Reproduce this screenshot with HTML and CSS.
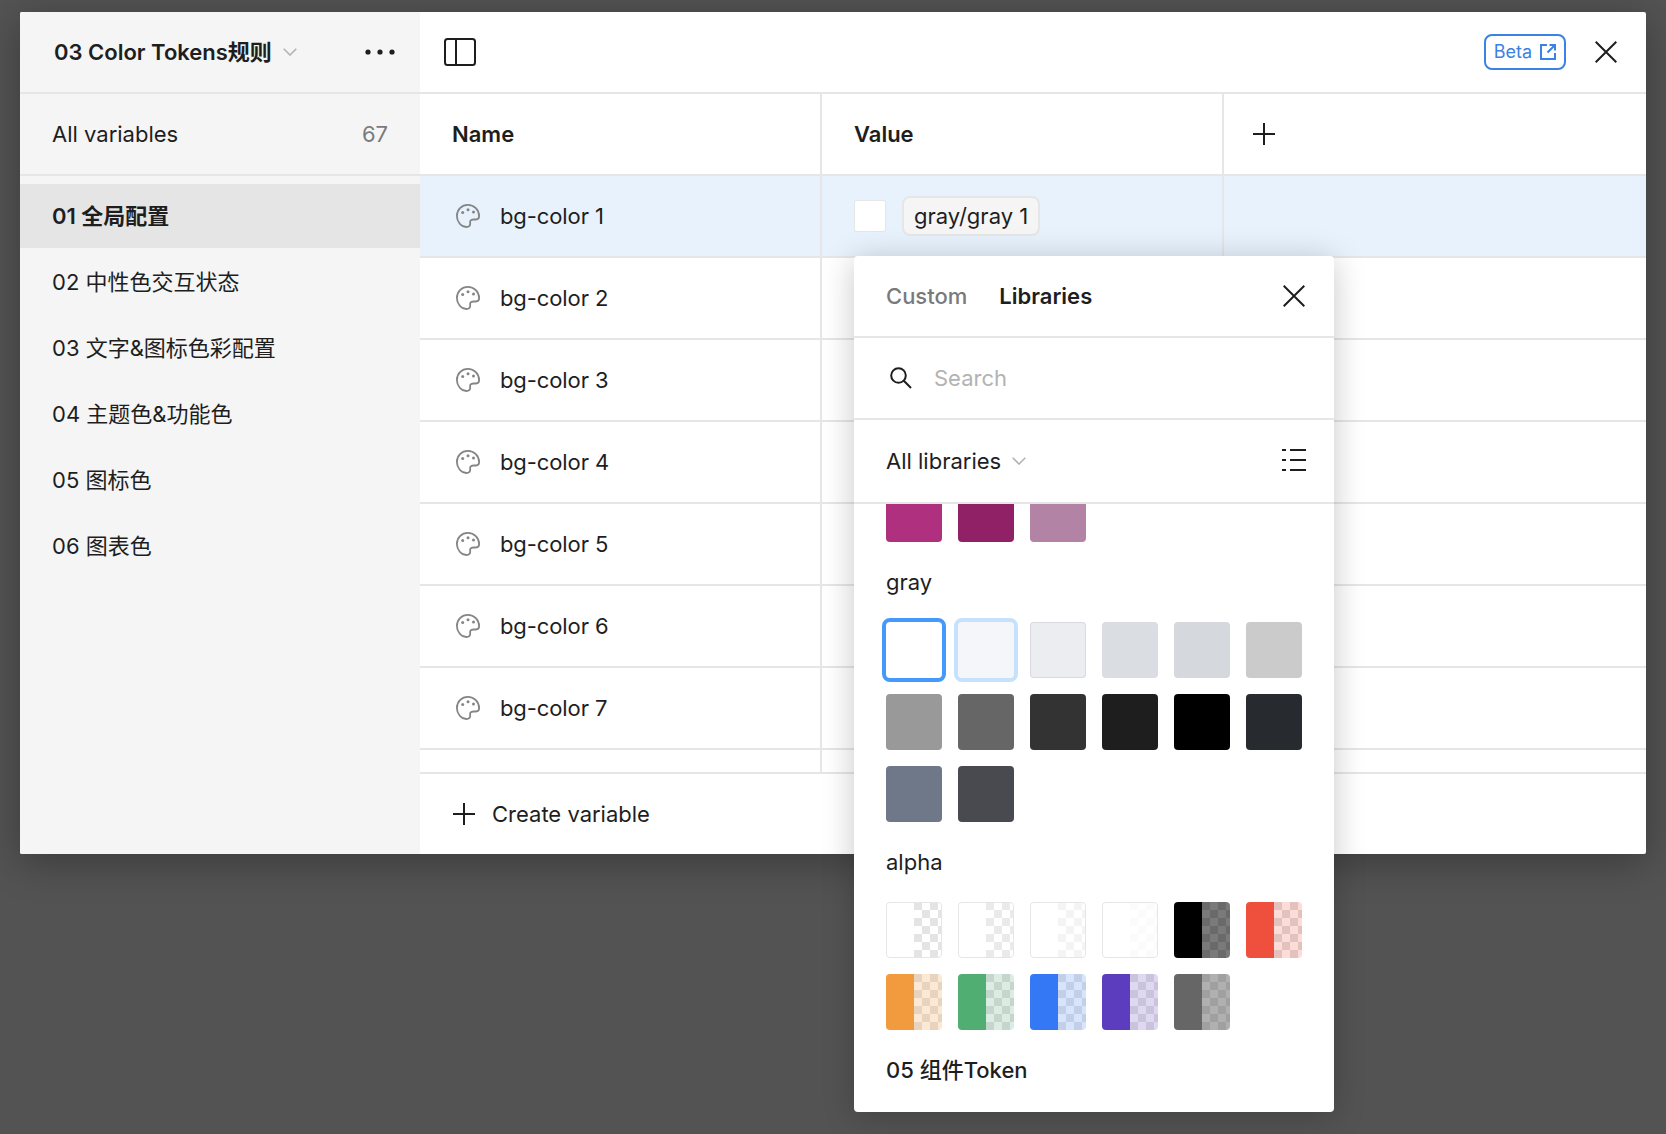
FILE: index.html
```html
<!DOCTYPE html>
<html>
<head>
    <title>Variables</title>
    <link rel="stylesheet" href="styles.css">
</head>
<body>
    <svg class="defs" width="0" height="0">
        <symbol id="palette" viewBox="0 0 24 24">
            <path d="M12 .9C5.500.9.900 5.800.900 12c0 6 4.500 11 9.400 11 2.500 0 3.900-1 3.900-3.200 0-1.500-.3-2.200.2-3.100.7-1.100 2-1.200 3.100-1.200h2.500c2 0 3.100-1.300 3.100-3.500C23.100 6 18 .9 12 .9Z" fill="none" stroke="#858585" stroke-width="1.800"/>
            <circle cx="6.700" cy="8.600" r="1.500" fill="#858585"/>
            <circle cx="12" cy="5.800" r="1.500" fill="#858585"/>
            <circle cx="17.500" cy="8" r="1.500" fill="#858585"/>
        </symbol>
        <symbol id="close" viewBox="0 0 22 22">
            <path d="M.7.7l20.600 20.600M21.300.7L.7 21.300" fill="none" stroke="#1e1e1e" stroke-width="2"/>
        </symbol>
        <symbol id="plus" viewBox="0 0 22 22">
            <path d="M11 0v22M0 11h22" fill="none" stroke="#1e1e1e" stroke-width="2"/>
        </symbol>
        <symbol id="chevron" viewBox="0 0 14 8">
            <path d="M.7.7L7 7l6.300-6.300" fill="none" stroke="#b3b3b3" stroke-width="1.600"/>
        </symbol>
    </svg>

    <div class="window">
        <div class="topbar">
            <div class="collection">
                <span class="collection-name">03 Color Tokens规则</span>
                <svg class="chevron"><use href="#chevron"/></svg>
                <svg class="dots" viewBox="0 0 30 6"><circle cx="3" cy="3" r="2.600"/><circle cx="15" cy="3" r="2.600"/><circle cx="27" cy="3" r="2.600"/></svg>
            </div>
            <div class="toolbar">
                <svg class="panel-icon" viewBox="0 0 32 28">
                    <rect x="1" y="1" width="30" height="26" rx="2.500"/>
                    <path d="M12 1v26"/>
                </svg>
                <div class="toolbar-right">
                    <div class="beta">
                        <span>Beta</span>
                        <svg class="beta-icon" viewBox="0 0 16 16"><path d="M7 1H1v14h14V9M9.500 1H15v5.500M15 1L7.500 8.500"/></svg>
                    </div>
                    <svg class="close"><use href="#close"/></svg>
                </div>
            </div>
        </div>

        <div class="content">
            <div class="sidebar">
                <div class="all-vars">
                    <span>All variables</span>
                    <span class="count">67</span>
                </div>
                <ul class="groups">
                    <li class="selected">01 全局配置</li>
                    <li>02 中性色交互状态</li>
                    <li>03 文字&amp;图标色彩配置</li>
                    <li>04 主题色&amp;功能色</li>
                    <li>05 图标色</li>
                    <li>06 图表色</li>
                </ul>
            </div>

            <div class="main">
                <div class="row head">
                    <div class="cell">Name</div>
                    <div class="cell">Value</div>
                    <div class="cell add"><svg class="plus"><use href="#plus"/></svg></div>
                </div>
                <div class="row active">
                    <div class="cell var-name"><svg class="palette"><use href="#palette"/></svg>bg-color 1</div>
                    <div class="cell">
                        <span class="value-swatch"></span>
                        <span class="chip">gray/gray 1</span>
                    </div>
                    <div class="cell"></div>
                </div>
                <div class="row">
                    <div class="cell var-name"><svg class="palette"><use href="#palette"/></svg>bg-color 2</div>
                    <div class="cell"></div>
                    <div class="cell"></div>
                </div>
                <div class="row">
                    <div class="cell var-name"><svg class="palette"><use href="#palette"/></svg>bg-color 3</div>
                    <div class="cell"></div>
                    <div class="cell"></div>
                </div>
                <div class="row">
                    <div class="cell var-name"><svg class="palette"><use href="#palette"/></svg>bg-color 4</div>
                    <div class="cell"></div>
                    <div class="cell"></div>
                </div>
                <div class="row">
                    <div class="cell var-name"><svg class="palette"><use href="#palette"/></svg>bg-color 5</div>
                    <div class="cell"></div>
                    <div class="cell"></div>
                </div>
                <div class="row">
                    <div class="cell var-name"><svg class="palette"><use href="#palette"/></svg>bg-color 6</div>
                    <div class="cell"></div>
                    <div class="cell"></div>
                </div>
                <div class="row">
                    <div class="cell var-name"><svg class="palette"><use href="#palette"/></svg>bg-color 7</div>
                    <div class="cell"></div>
                    <div class="cell"></div>
                </div>
                <div class="row cut">
                    <div class="cell"></div>
                    <div class="cell"></div>
                    <div class="cell"></div>
                </div>
                <div class="create">
                    <svg class="plus"><use href="#plus"/></svg>
                    <span>Create variable</span>
                </div>
            </div>
        </div>

        <!-- colour picker sits over the table and hangs below the window -->
        <div class="picker">
            <div class="picker-tabs">
                <span class="tab">Custom</span>
                <span class="tab on">Libraries</span>
                <svg class="close"><use href="#close"/></svg>
            </div>
            <div class="picker-search">
                <svg class="search-icon" viewBox="0 0 22 22"><circle cx="8.500" cy="8.500" r="7.300"/><path d="M13.800 13.800L21 21"/></svg>
                <span>Search</span>
            </div>
            <div class="picker-filter">
                <span>All libraries</span>
                <svg class="chevron"><use href="#chevron"/></svg>
                <svg class="list-icon" viewBox="0 0 24 22"><path d="M0 1h4M8 1h16M0 11h4M8 11h16M0 21h4M8 21h16"/></svg>
            </div>
            <div class="picker-list">
                <div class="swatches cut-top">
                    <span class="sw c-pink1"></span>
                    <span class="sw c-pink2"></span>
                    <span class="sw c-pink3"></span>
                </div>
                <div class="lib-label">gray</div>
                <div class="swatches">
                    <span class="sw c-white picked"></span>
                    <span class="sw c-g2 hovered"></span>
                    <span class="sw c-g3"></span>
                    <span class="sw c-g4"></span>
                    <span class="sw c-g5"></span>
                    <span class="sw c-g6"></span>
                    <span class="sw c-g7"></span>
                    <span class="sw c-g8"></span>
                    <span class="sw c-g9"></span>
                    <span class="sw c-g10"></span>
                    <span class="sw c-g11"></span>
                    <span class="sw c-g12"></span>
                    <span class="sw c-g13"></span>
                    <span class="sw c-g14"></span>
                </div>
                <div class="lib-label">alpha</div>
                <div class="swatches">
                    <span class="sw alpha a-w1"></span>
                    <span class="sw alpha a-w2"></span>
                    <span class="sw alpha a-w3"></span>
                    <span class="sw alpha a-w4"></span>
                    <span class="sw alpha a-black"></span>
                    <span class="sw alpha a-red"></span>
                    <span class="sw alpha a-orange"></span>
                    <span class="sw alpha a-green"></span>
                    <span class="sw alpha a-blue"></span>
                    <span class="sw alpha a-purple"></span>
                    <span class="sw alpha a-gray"></span>
                </div>
                <div class="lib-label strong">05 组件Token</div>
            </div>
        </div>
    </div>
</body>
</html>
```

FILE: styles.css
```css
* { box-sizing: border-box; }
html, body { height: 100%; }
body {
    margin: 0;
    padding: 12px 20px;
    background: #535353;
    overflow: hidden;
    font-family: Inter, "Noto Sans CJK SC", sans-serif;
    font-size: 22px;
    line-height: 24px;
    color: #1e1e1e;
}
svg { display: block; flex: none; }
.defs { position: absolute; }

.window {
    position: relative;
    width: 1626px;
    height: 842px;
    background: #fff;
    border-radius: 2px;
    box-shadow: 0 8px 40px rgba(0, 0, 0, .3);
}

/* top bar */
.topbar { display: flex; height: 82px; border-bottom: 2px solid #e6e6e6; }
.collection {
    display: flex;
    align-items: center;
    width: 400px;
    padding: 0 24px 0 34px;
    background: #f5f5f5;
    border-radius: 2px 0 0 0;
}
.collection-name { font-weight: 600; }
.collection .chevron { margin-left: 11px; }
.chevron { width: 14px; height: 8px; }
.dots { width: 32px; height: 6px; margin-left: auto; fill: #1e1e1e; }
.toolbar { flex: 1; display: flex; align-items: center; padding: 0 29px 0 24px; }
.panel-icon { width: 32px; height: 28px; fill: none; stroke: #1e1e1e; stroke-width: 2; }
.toolbar-right { display: flex; align-items: center; margin-left: auto; }
.beta {
    display: flex;
    align-items: center;
    gap: 8px;
    height: 36px;
    padding: 0 8px;
    border: 2px solid #3b82e4;
    border-radius: 8px;
    font-size: 18px;
    color: #3b82e4;
}
.beta-icon { width: 16px; height: 16px; fill: none; stroke: #3b82e4; stroke-width: 2; }
.close { width: 22px; height: 22px; }
.toolbar-right .close { margin-left: 29px; }

/* body */
.content { display: flex; height: 760px; }
.sidebar { width: 400px; background: #f5f5f5; border-radius: 0 0 0 2px; }
.all-vars {
    display: flex;
    justify-content: space-between;
    align-items: center;
    height: 82px;
    padding: 0 32px;
    border-bottom: 2px solid #e6e6e6;
}
.count { color: #7a7a7a; }
.groups { margin: 0; padding: 8px 0 0; list-style: none; }
.groups li {
    display: flex;
    align-items: center;
    height: 64px;
    margin-bottom: 2px;
    padding: 0 32px;
}
.groups .selected { background: #e5e5e5; font-weight: 600; }

/* table */
.main { flex: 1; display: flex; flex-direction: column; }
.row {
    display: grid;
    grid-template-columns: 402px 402px 1fr;
    height: 82px;
    flex: none;
    border-bottom: 2px solid #e6e6e6;
}
.row.head { font-weight: 600; }
.row.active { background: #e7f2fc; }
.row.cut { height: 22px; border-bottom: 0; }
.cell {
    display: flex;
    align-items: center;
    padding: 0 32px;
    border-right: 2px solid #e6e6e6;
}
.cell:last-child { border-right: 0; }
.cell.add { padding-left: 29px; }
.var-name { letter-spacing: -.1px; }
.plus { width: 22px; height: 22px; }
.palette { width: 24px; height: 24px; margin-right: 20px; margin-left: 4px; }
.value-swatch {
    width: 32px;
    height: 32px;
    background: #fff;
    border: 1px solid #e6e6e6;
    border-radius: 2px;
}
.chip {
    display: flex;
    align-items: center;
    height: 40px;
    margin-left: 16px;
    padding: 0 10px;
    background: #f5f5f5;
    border: 2px solid #e6e6e6;
    border-radius: 8px;
}
.create {
    display: flex;
    align-items: center;
    gap: 17px;
    height: 82px;
    padding-left: 33px;
    border-top: 2px solid #e6e6e6;
}

/* picker */
.picker {
    position: absolute;
    left: 834px;
    top: 244px;
    width: 480px;
    height: 856px;
    background: #fff;
    border-radius: 4px;
    box-shadow: 0 4px 32px rgba(0, 0, 0, .22);
}
.picker-tabs {
    display: flex;
    align-items: center;
    gap: 32px;
    height: 82px;
    padding: 0 29px 0 32px;
    border-bottom: 2px solid #e6e6e6;
}
.tab { color: #7a7a7a; font-weight: 500; }
.tab.on { color: #1e1e1e; font-weight: 600; }
.picker-tabs .close { margin-left: auto; }
.picker-search {
    display: flex;
    align-items: center;
    gap: 22px;
    height: 82px;
    padding-left: 36px;
    border-bottom: 2px solid #e6e6e6;
    color: #b3b3b3;
}
.search-icon { width: 22px; height: 22px; fill: none; stroke: #1e1e1e; stroke-width: 2; }
.picker-filter {
    display: flex;
    align-items: center;
    height: 84px;
    padding: 0 28px 0 32px;
    border-bottom: 2px solid #e6e6e6;
}
.picker-filter .chevron { margin-left: 11px; }
.list-icon { width: 24px; height: 22px; margin: 0 0 2px auto; fill: none; stroke: #1e1e1e; stroke-width: 2; }
.picker-list { padding: 0 32px; }
.lib-label { margin: 28px 0; }
.lib-label.strong { font-weight: 500; margin-bottom: 0; }
.swatches { display: grid; grid-template-columns: repeat(6, 56px); gap: 16px; }
.sw { display: block; height: 56px; border-radius: 4px; }
.cut-top .sw { height: 38px; border-radius: 0 0 4px 4px; }

.c-pink1 { background: #b03080; }
.c-pink2 { background: #912167; }
.c-pink3 { background: #b283a5; }
.c-white { background: #fff; }
.c-g2 { background: #f5f6fa; }
.c-g3 { background: #ebedf1; box-shadow: inset 0 0 0 1px #d8dadf; }
.c-g4 { background: #dadde1; }
.c-g5 { background: #d5d8dc; }
.c-g6 { background: #cbcbcb; }
.c-g7 { background: #999; }
.c-g8 { background: #666; }
.c-g9 { background: #333; }
.c-g10 { background: #1e1e1e; }
.c-g11 { background: #000; }
.c-g12 { background: #272a2f; }
.c-g13 { background: #6e7888; }
.c-g14 { background: #484a50; }
.picked { outline: 4px solid #4499fb; outline-offset: 0; }
.hovered { outline: 4px solid #c6e1fb; outline-offset: 0; }

/* half solid, half checker: --s solid, --l light cell, --d dark cell */
.alpha {
    background:
        linear-gradient(90deg, var(--s) 50%, transparent 50%),
        repeating-conic-gradient(var(--l) 0 25%, var(--d) 0 50%) 28px 0 / 16px 16px;
}
.a-w1, .a-w2, .a-w3, .a-w4 { --s: #fff; --l: #fff; box-shadow: inset 0 0 0 1px #e6e6e6; }
.a-w1 { --d: #e4e4e4; }
.a-w2 { --d: #eaeaea; }
.a-w3 { --d: #f4f4f4; }
.a-w4 { --d: #fbfbfb; }
.a-black { --s: #000; --l: #7a7a7a; --d: #6a6a6a; }
.a-red { --s: #ee503d; --l: #fbdcd8; --d: #e3c2be; }
.a-orange { --s: #f19a3e; --l: #fbe8d5; --d: #e8d3be; }
.a-green { --s: #50ae72; --l: #dbede2; --d: #c7d6cc; }
.a-blue { --s: #3478f6; --l: #d6e4fd; --d: #c2cfe6; }
.a-purple { --s: #5c3dbd; --l: #ded8f2; --d: #c9c4dc; }
.a-gray { --s: #666; --l: #b0b0b0; --d: #a0a0a0; }
```
